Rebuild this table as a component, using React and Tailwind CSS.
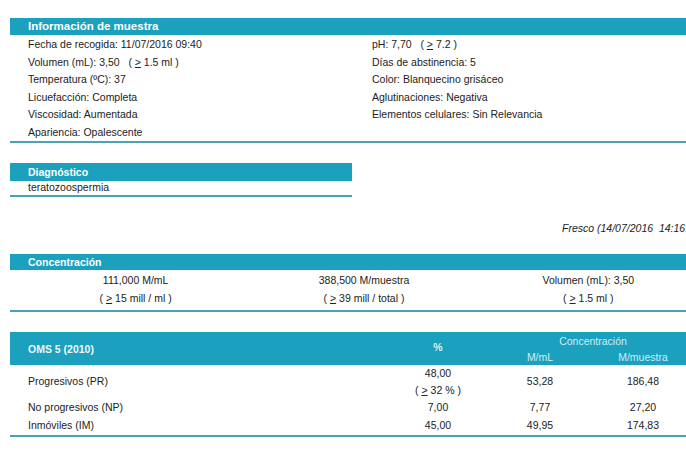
import React from "react";

const bar = "bg-[#1ba0bd] text-white font-bold";
const line = "border-b-2 border-[#4aa3b3]";

const Ge = ({ children }) => <span className="underline">{children}</span>;

const InfoMuestra = () => {
  const left = [
    "Fecha de recogida: 11/07/2016 09:40",
    <>Volumen (mL): 3,50&nbsp;&nbsp;&nbsp;( <Ge>&gt;</Ge> 1.5 ml )</>,
    "Temperatura (ºC): 37",
    "Licuefacción: Completa",
    "Viscosidad: Aumentada",
    "Apariencia: Opalescente",
  ];
  const right = [
    <>pH: 7,70&nbsp;&nbsp;&nbsp;( <Ge>&gt;</Ge> 7.2 )</>,
    "Días de abstinencia: 5",
    "Color: Blanquecino grisáceo",
    "Aglutinaciones: Negativa",
    "Elementos celulares: Sin Relevancia",
  ];
  return (
    <div className="ml-[10px] mt-[18px] w-[700px]">
      <div className={`${bar} h-[17px] pl-[18px] text-[11.5px] leading-[17px] text-[#eef9fc]`}>
        Información de muestra
      </div>
      <div className={`flex ${line} h-[108px] pt-[1px]`}>
        <div className="w-[362px] pl-[18px]">
          {left.map((t, i) => (
            <div key={i} className="leading-[17.6px]">{t}</div>
          ))}
        </div>
        <div>
          {right.map((t, i) => (
            <div key={i} className="leading-[17.6px]">{t}</div>
          ))}
        </div>
      </div>
    </div>
  );
};

const Diagnostico = () => (
  <div className="ml-[10px] mt-[20px] w-[342px]">
    <div className={`${bar} h-[18px] pl-[18px] leading-[18px] text-[#e3f5fa]`}>Diagnóstico</div>
    <div className={`${line} h-[16px] pl-[18px] leading-[13px]`}>teratozoospermia</div>
  </div>
);

const Concentracion = () => {
  const cols = [
    ["111,000 M/mL", <>( <Ge>&gt;</Ge> 15 mill / ml )</>, "w-[252px]"],
    ["388,500 M/muestra", <>( <Ge>&gt;</Ge> 39 mill / total )</>, "w-[206px]"],
    ["Volumen (mL): 3,50", <>( <Ge>&gt;</Ge> 1.5 ml )</>, "w-[244px]"],
  ];
  return (
    <div className="ml-[10px] mt-[20px] w-[700px]">
      <div className={`${bar} h-[16px] pl-[18px] leading-[16px] text-[#e3f5fa]`}>Concentración</div>
      <div className={`flex ${line} pt-[1px] pb-[3px]`}>
        {cols.map(([a, b, w], i) => (
          <div key={i} className={`${w} text-center`}>
            <div className="leading-[18px]">{a}</div>
            <div className="leading-[18px]">{b}</div>
          </div>
        ))}
      </div>
    </div>
  );
};

const Oms = () => {
  const rows = [
    ["No progresivos (NP)", "7,00", "7,77", "27,20"],
    ["Inmóviles (IM)", "45,00", "49,95", "174,83"],
  ];
  return (
    <div className="ml-[10px] mt-[20px] w-[700px]">
      <div className="flex h-[33px] bg-[#1ba0bd]">
        <div className="w-[376px] pl-[18px] font-bold leading-[34px] text-[#eef9fc]">OMS 5 (2010)</div>
        <div className="w-[104px] text-center leading-[30px] font-bold text-[#d8f1f7]">%</div>
        <div className="flex flex-col text-[#cdeef6]">
          <div className="w-[206px] text-center leading-[16px] pt-[1px]">Concentración</div>
          <div className="flex">
            <div className="w-[100px] text-center leading-[16px]">M/mL</div>
            <div className="w-[106px] text-center leading-[16px]">M/muestra</div>
          </div>
        </div>
      </div>
      <div className={`${line}`}>
        <div className="flex h-[34px] items-center">
          <div className="w-[376px] pl-[18px]">Progresivos (PR)</div>
          <div className="w-[104px] text-center">
            <div className="leading-[17px]">48,00</div>
            <div className="leading-[17px]">( <Ge>&gt;</Ge> 32 % )</div>
          </div>
          <div className="w-[100px] text-center">53,28</div>
          <div className="w-[106px] text-center">186,48</div>
        </div>
        {rows.map(([l, a, b, c], i) => (
          <div key={i} className="flex h-[18px] items-center">
            <div className="w-[376px] pl-[18px]">{l}</div>
            <div className="w-[104px] text-center">{a}</div>
            <div className="w-[100px] text-center">{b}</div>
            <div className="w-[106px] text-center">{c}</div>
          </div>
        ))}
      </div>
    </div>
  );
};

export default function App() {
  return (
    <div className="w-[686px] h-[451px] overflow-hidden bg-white text-[10.5px] text-[#222] font-['Liberation_Sans',Arial,sans-serif]">
      <InfoMuestra />
      <Diagnostico />
      <div className="mt-[25px] pl-[562px] whitespace-nowrap italic leading-[12px]">
        Fresco (14/07/2016&nbsp;&nbsp;14:16:
      </div>
      <Concentracion />
      <Oms />
    </div>
  );
}
